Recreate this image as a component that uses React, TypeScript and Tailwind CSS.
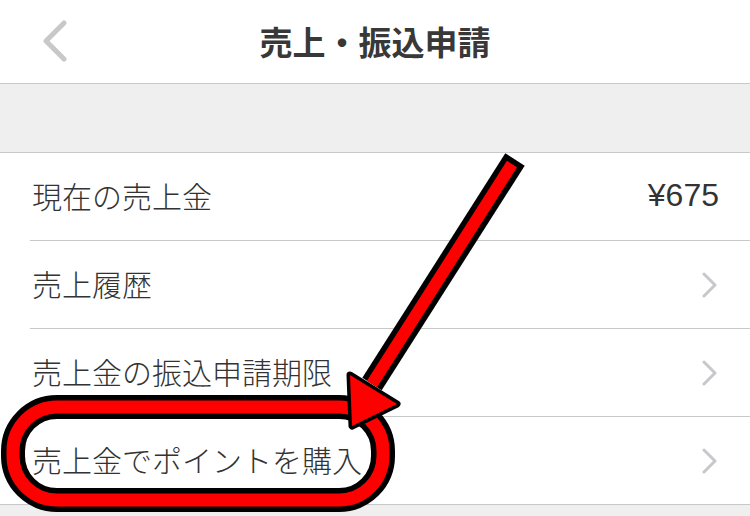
import React from "react";

const jp = { fontFamily: '"Noto Sans CJK JP", "Noto Sans", sans-serif' };

function Chevron() {
  return (
    <svg width="18" height="26" viewBox="0 0 18 26" className="shrink-0">
      <polyline points="3,2 14,13 3,24" fill="none" stroke="#c7c7cc" strokeWidth="3" strokeLinecap="round" strokeLinejoin="round" />
    </svg>
  );
}

function Row({ label, right }: { label: string; right?: React.ReactNode }) {
  return (
    <div className="pl-[30px] bg-white">
      <div className="h-[88px] border-b border-[#c8c8c8] flex items-center justify-between pr-[31px]">
        <span className="text-[30px] font-light text-[#333] pl-[2px] pb-[3px]" style={jp}>{label}</span>
        {right}
      </div>
    </div>
  );
}

export default function App() {
  return (
    <div className="relative w-[750px] h-[516px] overflow-hidden bg-[#efefef]">
      <div className="h-[84px] bg-white border-b border-[#c8c8c8] flex items-center justify-center relative">
        <svg width="30" height="42" viewBox="0 0 30 42" className="absolute left-[40px] top-[20px]">
          <polyline points="24,3 6,21 24,39" fill="none" stroke="#c8c8c8" strokeWidth="5" strokeLinecap="round" strokeLinejoin="round" />
        </svg>
        <span className="text-[33px] font-bold text-[#383838]" style={jp}>売上・振込申請</span>
      </div>
      <div className="h-[69px] bg-[#efefef] border-b border-[#c8c8c8]" />
      <Row
        label="現在の売上金"
        right={<span className="text-[32px] text-[#333] pb-[3px]" style={{ fontFamily: '"Liberation Sans", Arial, sans-serif' }}>¥675</span>}
      />
      <Row label="売上履歴" right={<Chevron />} />
      <Row label="売上金の振込申請期限" right={<Chevron />} />
      <div className="bg-white border-b border-[#c8c8c8]">
        <div className="h-[87px] flex items-center justify-between pl-[32px] pr-[31px]">
          <span className="text-[30px] font-light text-[#333] pb-[3px]" style={jp}>売上金でポイントを購入</span>
          <Chevron />
        </div>
      </div>

      <svg className="absolute left-0 top-0 pointer-events-none" width="750" height="516" viewBox="0 0 750 516">
        <rect x="13" y="407" width="370" height="93" rx="44" fill="none" stroke="#000" strokeWidth="24" />
        <rect x="13" y="407" width="370" height="93" rx="44" fill="none" stroke="#ff0000" strokeWidth="13" />
        <line x1="515" y1="159.5" x2="372" y2="384" stroke="#000" strokeWidth="23" />
        <polygon points="350,375 397,404 352,426" fill="#000" stroke="#000" strokeWidth="7" strokeLinejoin="round" />
        <line x1="512" y1="164" x2="372" y2="384" stroke="#ff0000" strokeWidth="12" />
        <polygon points="350,375 397,404 352,426" fill="#ff0000" />
      </svg>
    </div>
  );
}
